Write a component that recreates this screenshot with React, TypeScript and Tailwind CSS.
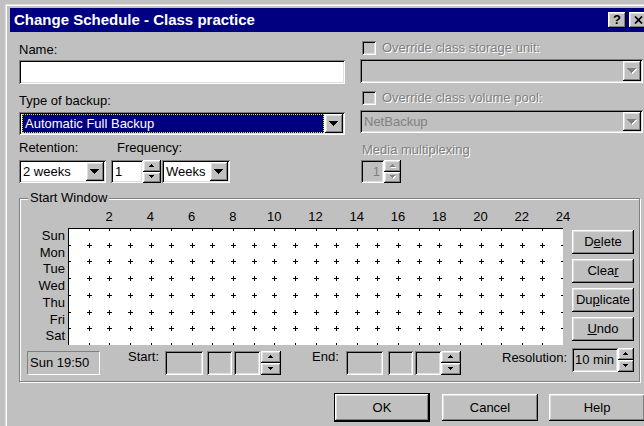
import React from "react";

// classic 3D bevels
const sunken =
  "shadow-[inset_1px_1px_0_#808080,inset_-1px_-1px_0_#ffffff,inset_2px_2px_0_#000000,inset_-2px_-2px_0_#dfdfdf]";
const raised =
  "shadow-[inset_-1px_-1px_0_#000000,inset_1px_1px_0_#ffffff,inset_-2px_-2px_0_#808080,inset_2px_2px_0_#dfdfdf]";
const etched = "text-[#808080] [text-shadow:1px_1px_0_#ffffff]";

function Tri({ rows, up, off }: { rows: number[]; up?: boolean; off?: boolean }) {
  const w = rows[0];
  const list = up ? [...rows].reverse() : rows;
  return (
    <svg width={w + 1} height={list.length + 1} shapeRendering="crispEdges" className="block">
      {list.map((r, i) => (
        <g key={i}>
          {off && <rect x={(w - r) / 2 + 1} y={i + 1} width={r} height={1} fill="#ffffff" />}
          <rect x={(w - r) / 2} y={i} width={r} height={1} fill={off ? "#808080" : "#000000"} />
        </g>
      ))}
    </svg>
  );
}

function DropBtn({ off }: { off?: boolean }) {
  return (
    <div className={`flex w-[18px] shrink-0 items-center justify-center bg-[#c0c0c0] ${raised}`}>
      <Tri rows={[9, 7, 5, 3, 1]} off={off} />
    </div>
  );
}

function Spin({ w, off }: { w: string; off?: boolean }) {
  return (
    <div className={`flex h-full shrink-0 flex-col ${w}`}>
      <div className={`flex flex-1 items-center justify-center bg-[#c0c0c0] ${raised}`}>
        <Tri rows={[5, 3, 1]} up off={off} />
      </div>
      <div className={`flex flex-1 items-center justify-center bg-[#c0c0c0] ${raised}`}>
        <Tri rows={[5, 3, 1]} off={off} />
      </div>
    </div>
  );
}

function Combo({
  w,
  text,
  off,
  hi,
  h = "h-[23px]",
  className = "",
}: {
  w: string;
  text: string;
  off?: boolean;
  hi?: boolean;
  h?: string;
  className?: string;
}) {
  return (
    <div className={`flex shrink-0 p-[2px] ${h} ${w} ${sunken} ${off ? "bg-[#c0c0c0]" : "bg-white"} ${className}`}>
      <div className="flex min-w-0 flex-1 items-center overflow-hidden px-[1px]">
        {hi ? (
          <div className="flex h-full w-full items-center border border-dotted border-[#d8d870] bg-[#000080] pl-[2px] text-white">
            {text}
          </div>
        ) : (
          <span className={`whitespace-nowrap pl-[1px] ${off ? "text-[#808080]" : ""}`}>{text}</span>
        )}
      </div>
      <DropBtn off={off} />
    </div>
  );
}

function Check({ label, className = "" }: { label: string; className?: string }) {
  return (
    <div className={`flex h-[14px] items-center pl-[2px] ${className}`}>
      <div className={`h-[14px] w-[14px] shrink-0 bg-[#c0c0c0] ${sunken}`} />
      <span className={`ml-[6px] whitespace-nowrap ${etched}`}>{label}</span>
    </div>
  );
}

function Btn({ children, className = "" }: { children: React.ReactNode; className?: string }) {
  return (
    <div className={`flex items-center justify-center bg-[#c0c0c0] ${raised} ${className}`}>{children}</div>
  );
}

function TimeBox({ w, className = "" }: { w: string; className?: string }) {
  return <div className={`h-[24px] shrink-0 bg-[#c0c0c0] ${sunken} ${w} ${className}`} />;
}

function TitleBar() {
  return (
    <div className="flex h-[24px] w-[638px] items-center bg-[#000080] pl-[4px] pr-[1px]">
      <span className="flex-1 text-[15px] font-bold text-white">Change Schedule - Class practice</span>
      <Btn className="h-[16px] w-[18px] text-[13px] font-bold">?</Btn>
      <Btn className="ml-[3px] h-[16px] w-[18px]">
        <svg width="9" height="8" className="block">
          <path d="M1 0.5L8 7.5M8 0.5L1 7.5" stroke="#000" strokeWidth="1.7" />
        </svg>
      </Btn>
    </div>
  );
}

function Grid() {
  const W = 495;
  const H = 117;
  const xs = Array.from({ length: 25 }, (_, k) => Math.round((k * W) / 24));
  const ys = Array.from({ length: 8 }, (_, j) => Math.round((j * H) / 7));
  let d = "";
  xs.forEach((x) =>
    ys.forEach((y) => {
      d += `M${x - 2} ${y + 0.5}h5M${x + 0.5} ${y - 2}v5`;
    })
  );
  return (
    <svg width={W} height={H} className="block shrink-0 bg-white">
      <path d={d} stroke="#000" shapeRendering="crispEdges" />
      <path d={`M0 0.5H${W}M0.5 0V${H}`} stroke="#000" shapeRendering="crispEdges" />
    </svg>
  );
}

const hours = ["2", "4", "6", "8", "10", "12", "14", "16", "18", "20", "22", "24"];
const days = ["Sun", "Mon", "Tue", "Wed", "Thu", "Fri", "Sat"];

function StartWindow() {
  return (
    <div className="relative mt-[15px] h-[184px] w-[621px] border border-[#808080] shadow-[inset_1px_1px_0_#ffffff,1px_1px_0_#ffffff]">
      <span className="absolute left-[8px] top-[-8px] bg-[#c0c0c0] px-[2px]">Start Window</span>
      <div className="flex">
        <div className="flex w-[543px] shrink-0 flex-col">
          <div className="mt-[11px] flex h-[14px] pl-[68.6px]">
            {hours.map((h) => (
              <span key={h} className="w-[41.25px] shrink-0 text-center">
                {h}
              </span>
            ))}
          </div>
          <div className="mt-[4px] flex">
            <div className="flex w-[48px] shrink-0 flex-col pr-[3px] text-right">
              {days.map((d) => (
                <span key={d} className="h-[16.71px] leading-[16.71px]">
                  {d}
                </span>
              ))}
            </div>
            <Grid />
          </div>
        </div>
        <div className="ml-[9px] mt-[31px] flex w-[62px] flex-col gap-[5px]">
          <Btn className="h-[24px]">
            D<span className="underline">e</span>lete
          </Btn>
          <Btn className="h-[24px]">
            Clea<span className="underline">r</span>
          </Btn>
          <Btn className="h-[24px]">
            Du<span className="underline">p</span>licate
          </Btn>
          <Btn className="h-[24px]">
            <span className="underline">U</span>ndo
          </Btn>
        </div>
      </div>
      <div className="mt-[3px] flex h-[27px] items-start">
        <div className="ml-[7px] mt-[3px] flex h-[24px] w-[73px] items-center border border-[#808080] border-b-white border-r-white px-[2px]">
          Sun 19:50
        </div>
        <span className="ml-[28px] mt-[2px] w-[37px] shrink-0">Start:</span>
        <div className="mt-[3px] flex h-[24px]">
          <TimeBox w="w-[38px]" />
          <TimeBox w="w-[25px]" className="ml-[4px]" />
          <TimeBox w="w-[26px]" className="ml-[2px]" />
          <Spin w="w-[20px] ml-[1px]" />
        </div>
        <span className="ml-[31px] mt-[2px] w-[34px] shrink-0">End:</span>
        <div className="mt-[3px] flex h-[24px]">
          <TimeBox w="w-[37px]" />
          <TimeBox w="w-[25px]" className="ml-[5px]" />
          <TimeBox w="w-[26px]" className="ml-[2px]" />
          <Spin w="w-[20px]" />
        </div>
        <span className="ml-[41px] mt-[3px] w-[70px] shrink-0">Resolution:</span>
        <div className="flex h-[24px]">
          <div className={`flex w-[46px] items-center whitespace-nowrap bg-[#c0c0c0] pl-[3px] ${sunken}`}>10 min</div>
          <Spin w="w-[16px]" />
        </div>
      </div>
    </div>
  );
}

export default function App() {
  return (
    <div className="h-[426px] w-[644px] overflow-hidden bg-[#c0c0c0] pl-[5px] pt-[4px] font-['Liberation_Sans',Arial,sans-serif] text-[13px] leading-[14px] text-black">
      <div className="h-[440px] w-[646px] pl-[5px] pt-[4px] shadow-[inset_1px_1px_0_#dfdfdf,inset_2px_2px_0_#ffffff]">
        <TitleBar />
        <div className="pl-[9px]">
          <div className="flex gap-[15px]">
            {/* name, backup type, retention, frequency */}
            <div className="flex w-[326px] shrink-0 flex-col">
              <div className="mt-[11px] h-[14px]">Name:</div>
              <div className={`mt-[3px] h-[24px] bg-white ${sunken}`} />
              <div className="mt-[10px] h-[14px]">Type of backup:</div>
              <Combo w="w-[326px]" text="Automatic Full Backup" hi className="mt-[4px]" />
              <div className="mt-[6px] flex h-[14px]">
                <span className="w-[98px]">Retention:</span>
                <span>Frequency:</span>
              </div>
              <div className="mt-[5px] flex h-[23px]">
                <Combo w="w-[87px]" text="2 weeks" />
                <div className={`ml-[5px] flex w-[32px] items-center bg-white pl-[4px] ${sunken}`}>1</div>
                <Spin w="w-[18px]" />
                <Combo w="w-[68px]" text="Weeks" className="ml-[1px]" />
              </div>
            </div>
            {/* override options */}
            <div className="flex w-[283px] shrink-0 flex-col">
              <Check label="Override class storage unit:" className="mt-[9px]" />
              <Combo w="w-full" h="h-[24px]" text="" off className="mt-[4px]" />
              <Check label="Override class volume pool:" className="mt-[8px]" />
              <Combo w="w-full" text="NetBackup" off className="mt-[5px]" />
              <div className={`mt-[10px] h-[14px] pl-[2px] ${etched}`}>Media multiplexing</div>
              <div className="mt-[3px] ml-[1px] flex h-[23px]">
                <div className={`flex w-[23px] items-center justify-end bg-[#c0c0c0] pr-[4px] text-[#808080] ${sunken}`}>1</div>
                <Spin w="w-[17px]" off />
              </div>
            </div>
          </div>
          <StartWindow />
          <div className="mt-[11px] flex h-[29px] items-center">
            <div className="ml-[315px] h-[29px] w-[96px] border border-black">
              <Btn className="h-full w-full">OK</Btn>
            </div>
            <Btn className="ml-[12px] h-[27px] w-[96px]">Cancel</Btn>
            <Btn className="ml-[11px] h-[27px] w-[96px]">Help</Btn>
          </div>
        </div>
      </div>
    </div>
  );
}
